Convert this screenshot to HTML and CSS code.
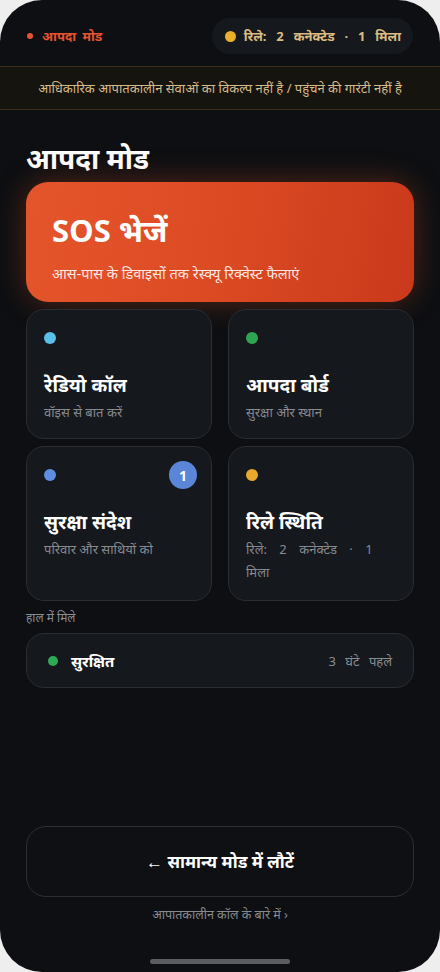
FILE: index.html
```html
<!DOCTYPE html>
<html lang="hi">
<head>
<meta charset="utf-8">
<link rel="stylesheet" href="styles.css">
</head>
<body>
<div class="phone">
  <div class="status">
    <div class="mode"><span class="mdot"></span>आपदा मोड</div>
    <div class="pill"><span class="ydot"></span>रिले: 2 कनेक्टेड · 1 मिला</div>
  </div>
  <div class="banner">आधिकारिक आपातकालीन सेवाओं का विकल्प नहीं है / पहुंचने की गारंटी नहीं है</div>
  <main class="content">
    <h1 class="title">आपदा मोड</h1>
    <div class="sos">
      <div class="sos-title">SOS भेजें</div>
      <div class="sos-sub">आस-पास के डिवाइसों तक रेस्क्यू रिक्वेस्ट फैलाएं</div>
    </div>
    <div class="grid">
      <div class="card">
        <div class="card-top"><span class="dot cyan"></span></div>
        <div class="card-title">रेडियो कॉल</div>
        <div class="card-sub">वॉइस से बात करें</div>
      </div>
      <div class="card">
        <div class="card-top"><span class="dot green"></span></div>
        <div class="card-title">आपदा बोर्ड</div>
        <div class="card-sub">सुरक्षा और स्थान</div>
      </div>
      <div class="card">
        <div class="card-top"><span class="dot blue"></span><span class="badge">1</span></div>
        <div class="card-title">सुरक्षा संदेश</div>
        <div class="card-sub">परिवार और साथियों को</div>
      </div>
      <div class="card">
        <div class="card-top"><span class="dot amber"></span></div>
        <div class="card-title">रिले स्थिति</div>
        <div class="card-sub wide">रिले: 2 कनेक्टेड · 1 मिला</div>
      </div>
    </div>
    <div class="section">हाल में मिले</div>
    <div class="recent">
      <span class="rdot"></span>
      <span class="rname">सुरक्षित</span>
      <span class="rtime">3 घंटे पहले</span>
    </div>
    <div class="spacer"></div>
    <div class="back">← सामान्य मोड में लौटें</div>
    <div class="link">आपातकालीन कॉल के बारे में ›</div>
  </main>
  <div class="home"></div>
</div>
</body>
</html>
```
FILE: styles.css
```css
* { box-sizing: border-box; margin: 0; padding: 0; }
html, body { width: 440px; height: 972px; background: #eeeeee; }
body { font-family: "Noto Sans", "Noto Sans Devanagari", Roboto, sans-serif; color: #fff; }
.phone {
  width: 440px; height: 972px; background: #0d0f12; border-radius: 42px;
  display: flex; flex-direction: column; overflow: hidden;
}
.status {
  display: flex; justify-content: space-between; align-items: center;
  padding: 18px 27px 12px 27px; height: 66px;
}
.mode { display: flex; align-items: center; gap: 9px; color: #e8532f; font-size: 13px; font-weight: 700; word-spacing: 3px; }
.mdot { width: 6px; height: 6px; border-radius: 50%; background: #e8532f; }
.pill {
  display: flex; align-items: center; gap: 8px; height: 36px; padding: 0 12px 0 13px;
  background: #15181c; border-radius: 18px; color: #dcbc82; font-size: 13px; font-weight: 700;
  word-spacing: 6.5px;
}
.ydot { width: 11px; height: 11px; border-radius: 50%; background: #e9b02c; }
.banner {
  height: 44px; display: flex; align-items: center; justify-content: center;
  background: #16140f; border-top: 1px solid #3b2f1c; border-bottom: 1px solid #3b2f1c;
  color: #d6bb8d; font-size: 13px;
}
.content { flex: 1; display: flex; flex-direction: column; padding: 0 26px; }
.title { font-size: 28px; font-weight: 700; margin-top: 29px; line-height: 38px; color: #fff; }
.sos {
  margin-top: 5px; height: 120px; border-radius: 22px;
  background: linear-gradient(100deg, #e5552b 0%, #dc4a23 50%, #c9391b 100%);
  box-shadow: 0 0 30px rgba(220, 80, 30, 0.35);
  padding: 26px 26px 0 26px;
}
.sos-title { font-family: "Open Sans", "Noto Sans", sans-serif; font-size: 31px; font-weight: 700; line-height: 44px; }
.sos-sub { margin-top: 11px; font-size: 14.5px; color: rgba(255,255,255,0.88); line-height: 20px; }
.grid { display: grid; grid-template-columns: 1fr 1fr; column-gap: 16px; row-gap: 7px; margin-top: 7px; }
.card {
  background: #15181c; border: 1px solid #2a2d32; border-radius: 18px;
  padding: 22px 17px 14px 17px;
}
.card-top { display: flex; justify-content: space-between; align-items: center; height: 12px; }
.dot { width: 12px; height: 12px; border-radius: 50%; }
.cyan { background: #5bc0e8; }
.green { background: #2ea553; }
.blue { background: #5f8ee0; }
.amber { background: #e9a92a; }
.badge {
  width: 28px; height: 28px; border-radius: 50%; background: #5b86d8; color: #fff;
  font-size: 14px; font-weight: 700; display: flex; align-items: center; justify-content: center;
  margin-right: -3px;
}
.card-title { margin-top: 27px; font-size: 19px; font-weight: 700; line-height: 28px; }
.card-sub { margin-top: 2px; font-size: 13px; color: #878a90; line-height: 23px; }
.card-sub.wide { word-spacing: 9px; padding-bottom: 2px; }
.section { margin-top: 8px; font-size: 12px; color: #8a8d92; line-height: 18px; }
.recent {
  margin-top: 6px; height: 55px; border-radius: 18px; background: #15181c; border: 1px solid #2a2d32;
  display: flex; align-items: center; padding: 0 21px 0 21px;
}
.rdot { width: 10px; height: 10px; border-radius: 50%; background: #2eaa55; }
.rname { margin-left: 13px; font-size: 15px; font-weight: 700; }
.rtime { margin-left: auto; font-size: 13px; color: #8a8d92; word-spacing: 6px; }
.spacer { flex: 1; }
.back {
  height: 71px; border-radius: 20px; border: 1px solid #2c2f34; background: #0e1014;
  display: flex; align-items: center; justify-content: center; font-size: 17px; font-weight: 700;
}
.link { margin-top: 9px; text-align: center; font-size: 12.5px; color: #878a90; line-height: 18px; margin-bottom: 35px; }
.home { align-self: center; width: 140px; height: 5px; border-radius: 3px; background: #5b5d61; margin-bottom: 8px; }
```
